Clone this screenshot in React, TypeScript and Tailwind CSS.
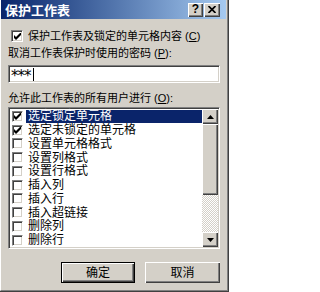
import React from "react";

function CheckMark() {
  return (
    <svg width="7" height="7" viewBox="0 0 7 7" className="block">
      <path d="M0 2 L2 4 L7 -1 L7 2 L2 7 L0 5 Z" fill="#000" />
    </svg>
  );
}

function Box({ checked, size }: { checked?: boolean; size: "lg" | "sm" }) {
  return (
    <div
      className={
        (size === "lg" ? "w-[12px] h-[12px] " : "w-[11px] h-[11px] ") +
        "shrink-0 bg-white border-t border-l border-t-[#808080] border-l-[#808080] border-b border-r border-b-white border-r-white shadow-[inset_1px_1px_#404040,inset_-1px_-1px_#d4d0c8] flex items-center justify-center"
      }
    >
      {checked ? <CheckMark /> : null}
    </div>
  );
}

function Arrow({ up }: { up?: boolean }) {
  return (
    <svg width="7" height="4" viewBox="0 0 7 4" className="block">
      {up ? (
        <path d="M3.5 0 L7 4 L0 4 Z" fill="#000" />
      ) : (
        <path d="M0 0 L7 0 L3.5 4 Z" fill="#000" />
      )}
    </svg>
  );
}

const rows: { label: string; checked: boolean }[] = [
  { label: "选定锁定单元格", checked: true },
  { label: "选定未锁定的单元格", checked: true },
  { label: "设置单元格格式", checked: false },
  { label: "设置列格式", checked: false },
  { label: "设置行格式", checked: false },
  { label: "插入列", checked: false },
  { label: "插入行", checked: false },
  { label: "插入超链接", checked: false },
  { label: "删除列", checked: false },
  { label: "删除行", checked: false },
];

export default function App() {
  return (
    <div className="w-[229px] h-[292px] border-r border-b border-r-[#404040] border-b-[#404040] overflow-hidden text-black font-['Liberation_Sans','Noto_Sans_CJK_SC',sans-serif]">
      <div className="w-full h-full bg-[#d4d0c8] border-l border-l-white border-r border-r-[#808080] border-b border-b-[#808080] pr-[1px] pb-[1px] flex flex-col">
        {/* Title bar */}
        <div className="h-[19px] shrink-0 flex items-center bg-linear-to-r from-[#0a246a] to-[#a6caf0] pl-[4px] pr-[6px]">
          <span className="text-white font-bold text-[13px] leading-none font-['Noto_Sans_CJK_SC',sans-serif]">
            保护工作表
          </span>
          <div className="ml-auto flex gap-[1px]">
            <div className="w-[15px] h-[14px] bg-[#d4d0c8] shadow-[inset_1px_1px_#fff,inset_-1px_-1px_#404040,inset_-2px_-2px_#808080] flex items-center justify-center">
              <span className="text-[12px] font-bold leading-none font-['Liberation_Sans',sans-serif] pb-[1px]">?</span>
            </div>
            <div className="w-[16px] h-[14px] bg-[#d4d0c8] shadow-[inset_1px_1px_#fff,inset_-1px_-1px_#404040,inset_-2px_-2px_#808080] flex items-center justify-center">
              <svg width="8" height="7" viewBox="0 0 8 7" className="block mb-[1px]">
                <path d="M0.5 0 L7.5 7 M7.5 0 L0.5 7" stroke="#000" strokeWidth="1.7" />
              </svg>
            </div>
          </div>
        </div>

        {/* Client */}
        <div className="flex flex-col pl-[7px]">
          <div className="mt-[11px] h-[12px] flex items-center">
            <div className="ml-[3px]">
              <Box checked size="lg" />
            </div>
            <span className="ml-[5px] text-[11px] leading-none whitespace-nowrap">
              保护工作表及锁定的单元格内容 (<u>C</u>)
            </span>
          </div>

          <div className="mt-[5px] h-[13px] flex items-center text-[11px] leading-none whitespace-nowrap">
            取消工作表保护时使用的密码 (<u>P</u>):
          </div>

          <div className="mt-[5px] w-[212px] h-[18px] bg-white border-t border-l border-t-[#808080] border-l-[#808080] border-b border-r border-b-white border-r-white shadow-[inset_1px_1px_#404040,inset_-1px_-1px_#d4d0c8] flex items-center pl-[2px]">
            <span className="text-[15px] leading-none tracking-[-1px] font-['DejaVu_Sans',sans-serif] pt-[4px]">***</span>
            <div className="w-[1px] h-[13px] bg-black ml-[2px]" />
          </div>

          <div className="mt-[9px] h-[13px] flex items-center text-[11px] leading-none whitespace-nowrap">
            允许此工作表的所有用户进行 (<u>O</u>):
          </div>

          <div className="mt-[2px] w-[212px] h-[142px] bg-white border-t border-l border-t-[#808080] border-l-[#808080] border-b border-r border-b-white border-r-white shadow-[inset_1px_1px_#404040,inset_-1px_-1px_#d4d0c8] p-[1px] flex">
            <div className="flex-1 flex flex-col pt-[0.5px]">
              {rows.map((r, i) => (
                <div key={r.label} className="h-[13.75px] flex items-center">
                  <div className="ml-[2px]">
                    <Box checked={r.checked} size="sm" />
                  </div>
                  <div
                    className={
                      "ml-[3px] flex-1 h-[13px] flex items-center pl-[2px] text-[12px] leading-none whitespace-nowrap " +
                      (i === 0 ? "bg-[#0a246a] text-white" : "")
                    }
                  >
                    {r.label}
                  </div>
                </div>
              ))}
            </div>
            <div className="w-[16px] flex flex-col">
              <div className="h-[15px] bg-[#d4d0c8] shadow-[inset_1px_1px_#fff,inset_-1px_-1px_#404040,inset_-2px_-2px_#808080] flex items-center justify-center">
                <Arrow up />
              </div>
              <div className="h-[71px] bg-[#d4d0c8] shadow-[inset_1px_1px_#fff,inset_-1px_-1px_#404040,inset_-2px_-2px_#808080]" />
              <div className="flex-1 bg-[repeating-conic-gradient(#ffffff_0%_25%,#d4d0c8_0%_50%)] bg-[length:2px_2px]" />
              <div className="h-[15px] bg-[#d4d0c8] shadow-[inset_1px_1px_#fff,inset_-1px_-1px_#404040,inset_-2px_-2px_#808080] flex items-center justify-center">
                <Arrow />
              </div>
            </div>
          </div>

          <div className="mt-[13px] w-[212px] h-[21px] flex justify-end gap-[10px]">
            <div className="w-[74px] h-full border border-black bg-[#d4d0c8] shadow-[inset_1px_1px_#fff,inset_-1px_-1px_#404040,inset_-2px_-2px_#808080] flex items-center justify-center text-[12px] leading-none">
              确定
            </div>
            <div className="w-[75px] h-full bg-[#d4d0c8] shadow-[inset_1px_1px_#fff,inset_-1px_-1px_#404040,inset_-2px_-2px_#808080] flex items-center justify-center text-[12px] leading-none">
              取消
            </div>
          </div>
        </div>
      </div>
    </div>
  );
}
